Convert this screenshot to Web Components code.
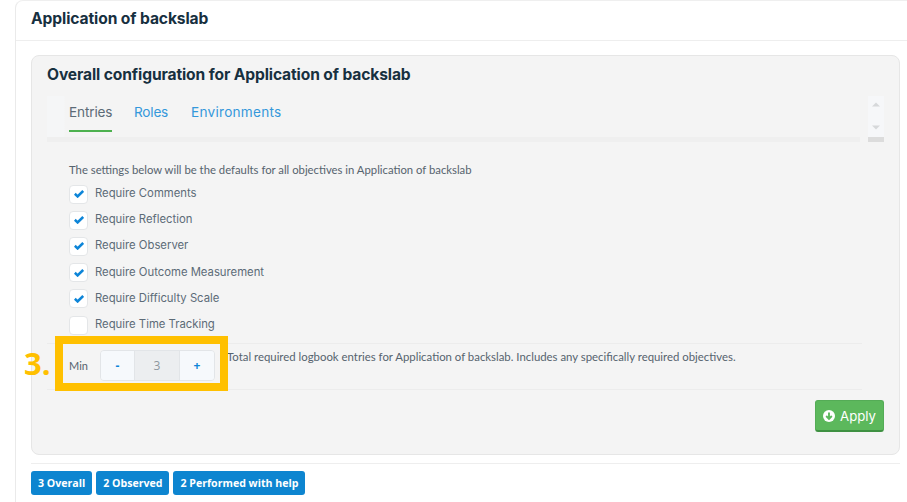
<!DOCTYPE html>
<html>
<head>
<meta charset="utf-8">
<style>
  html, body { margin: 0; height: 502px; overflow: hidden; background: #fff; }
  body { font-family: "Inter", "Liberation Sans", sans-serif; color: #5c6b77; position: relative; }
</style>
</head>
<body>
<app-card title="Application of backslab">
  <config-well title="Overall configuration for Application of backslab">
    <tab-bar></tab-bar>
    <p class="intro" style="margin:0;">The settings below will be the defaults for all objectives in Application of backslab</p>
    <check-row checked label="Require Comments"></check-row>
    <check-row checked label="Require Reflection"></check-row>
    <check-row checked label="Require Observer"></check-row>
    <check-row checked label="Require Outcome Measurement"></check-row>
    <check-row checked label="Require Difficulty Scale"></check-row>
    <check-row label="Require Time Tracking"></check-row>
    <min-stepper value="3">Total required logbook entries for Application of backslab. Includes any specifically required objectives.</min-stepper>
    <apply-button>Apply</apply-button>
  </config-well>
  <count-badge slot="footer">3 Overall</count-badge>
  <count-badge slot="footer">2 Observed</count-badge>
  <count-badge slot="footer">2 Performed with help</count-badge>
</app-card>
<call-out number="3."></call-out>

<script>
class AppCard extends HTMLElement {
  constructor() {
    super();
    this.attachShadow({ mode: 'open' });
  }
  connectedCallback() {
    this.shadowRoot.innerHTML = `
      <style>
        :host { display: block; margin-left: 15px; height: 502px; box-sizing: border-box;
          border-left: 1px solid #eaeaea; border-top: 1px solid #efefef; border-top-left-radius: 8px; }
        .head { height: 39px; border-bottom: 1px solid #eeeeee; padding-left: 15px; display: flex; align-items: center; }
        h2 { margin: 0; font: 700 15.6px "Inter", sans-serif; color: #17303f; position: relative; top: -2px; letter-spacing: -0.1px; }
        .body { padding: 14px 7px 0 15px; }
        .foot { margin: 8px 7px 0 15px; border-top: 1px solid #eeeeee; padding-top: 7px; display: flex; gap: 4px; }
      </style>
      <div class="head"><h2>${this.getAttribute('title')}</h2></div>
      <div class="body"><slot></slot></div>
      <div class="foot"><slot name="footer"></slot></div>`;
  }
}

class ConfigWell extends HTMLElement {
  constructor() {
    super();
    this.attachShadow({ mode: 'open' });
  }
  connectedCallback() {
    this.shadowRoot.innerHTML = `
      <style>
        :host { display: block; height: 400px; box-sizing: border-box; background: #f4f4f4;
          border: 1px solid #e6e6e6; border-radius: 8px; padding: 9px 15px 0; font-size: 11.5px; }
        h3 { margin: 0; font: 700 15.6px/20px "Inter", sans-serif; color: #17303f; letter-spacing: -0.12px; }
        .content { padding: 0; }
        ::slotted(p) { font: 400 11.3px/14px "Lato", sans-serif; color: #56636e; padding-left: 22px; margin-bottom: 5px !important; }
      </style>
      <h3>${this.getAttribute('title')}</h3>
      <div class="content"><slot></slot></div>`;
  }
}

class TabBar extends HTMLElement {
  constructor() {
    super();
    this.attachShadow({ mode: 'open' });
  }
  connectedCallback() {
    this.shadowRoot.innerHTML = `
      <style>
        :host { display: block; margin: 11px 0 21px; height: 46px; display: flex; gap: 8px; }
        .strip { flex: 1; height: 46px; display: flex; flex-direction: column; }
        .tabs { flex: 1; display: flex; gap: 22px; padding-left: 22px; background: linear-gradient(90deg,#f5f6f7 0,#f5f6f7 17px,#f4f4f4 18px); }
        .tab { height: 36px; box-sizing: border-box; padding-top: 7px; font: 400 13.6px/18px "Inter", sans-serif; color: #3498db; }
        .tab.on { color: #5c6b77; border-bottom: 2px solid #4db14f; width: 43px; letter-spacing: -0.15px; }
        .tab.env { margin-left: 1px; letter-spacing: 0.25px; }
        .tab.roles { letter-spacing: -0.2px; }
        .band { height: 5px; background: #efefef; }
        .bar { width: 16px; height: 46px; background: #f6f7f9; display: flex; flex-direction: column; align-items: center; }
        .bar svg { display: block; }
        .thumb { margin-top: auto; width: 16px; height: 5px; background: #dcdcdc; }
      </style>
      <div class="strip">
        <div class="tabs">
          <div class="tab on">Entries</div>
          <div class="tab roles">Roles</div>
          <div class="tab env">Environments</div>
        </div>
        <div class="band"></div>
      </div>
      <div class="bar">
        <svg width="8" height="5" viewBox="0 0 8 5" style="margin-top:6px"><path d="M4 0.5 8 4.5H0z" fill="#d6d8da"/></svg>
        <svg width="8" height="5" viewBox="0 0 8 5" style="margin-top:18px"><path d="M0 .5H8L4 4.5z" fill="#d6d8da"/></svg>
        <div class="thumb"></div>
      </div>`;
  }
}

class CheckRow extends HTMLElement {
  constructor() {
    super();
    this.attachShadow({ mode: 'open' });
  }
  connectedCallback() {
    const tick = this.hasAttribute('checked')
      ? '<svg width="10" height="8" viewBox="0 0 10 8"><path d="M.8 3.8 3.6 6.4 9.2 1" fill="none" stroke="#0d85d8" stroke-width="2.6"/></svg>'
      : '';
    this.shadowRoot.innerHTML = `
      <style>
        :host { display: flex; align-items: center; height: 26.2px; padding-left: 22px; gap: 7px; }
        .box { width: 17px; height: 17px; background: #fff; border: 1px solid #e4e6e8; border-radius: 4px;
          display: flex; align-items: center; justify-content: center; flex: none; margin-top: -2px; }
        span { font: 400 11.3px/14px "Inter", sans-serif; color: #5c6b77; position: relative; top: -2px; }
      </style>
      <div class="box">${tick}</div><span>${this.getAttribute('label')}</span>`;
  }
}

class MinStepper extends HTMLElement {
  constructor() {
    super();
    this.attachShadow({ mode: 'open' });
  }
  connectedCallback() {
    this.shadowRoot.innerHTML = `
      <style>
        :host { display: flex; align-items: flex-start; box-sizing: border-box; height: 47px; margin: 4px 22px 0 0;
          border-top: 1px solid #ececec; border-bottom: 1px solid #ececec; padding: 6px 0 0 22px; }
        .min { font: 400 11px/32px "Lato", sans-serif; color: #56636e; width: 31px; }
        .group { display: flex; height: 31px; width: 115px; box-sizing: border-box; border: 1px solid #e2e5e8; border-radius: 4px; overflow: hidden; }
        .btn { background: #f6f9fc; color: #0d85d8; font: 700 12px/29px "Open Sans", sans-serif; text-align: center; }
        .minus { width: 33px; border-right: 1px solid #e2e5e8; }
        .plus { flex: 1; border-left: 1px solid #e2e5e8; }
        .val { width: 44px; background: #eceef0; color: #8d979f; font: 400 12px/29px "Open Sans", sans-serif; text-align: center; }
        .note { margin-left: 12px; font: 400 11.39px/14px "Lato", sans-serif; color: #56636e; white-space: nowrap; }
      </style>
      <div class="min">Min</div>
      <div class="group">
        <div class="btn minus">-</div>
        <div class="val">${this.getAttribute('value')}</div>
        <div class="btn plus">+</div>
      </div>
      <div class="note"><slot></slot></div>`;
  }
}

class ApplyButton extends HTMLElement {
  constructor() {
    super();
    this.attachShadow({ mode: 'open' });
  }
  connectedCallback() {
    this.shadowRoot.innerHTML = `
      <style>
        :host { display: flex; justify-content: flex-end; margin-top: 10px; }
        button { width: 69px; height: 32px; padding: 0; border: 1px solid #54ac56; border-bottom: 2px solid #3f9142; border-radius: 3px;
          background: #5cb85c; color: #fff; font: 400 13.2px "Inter", sans-serif; display: flex; align-items: center; justify-content: center; gap: 5px; }
      </style>
      <button>
        <svg width="12" height="12" viewBox="0 0 12 12"><circle cx="6" cy="6" r="6" fill="#fff"/><path d="M6 2.6V9M3.2 6 6 8.8 8.8 6" fill="none" stroke="#5cb85c" stroke-width="1.9"/></svg>
        <slot></slot>
      </button>`;
  }
}

class CountBadge extends HTMLElement {
  constructor() {
    super();
    this.attachShadow({ mode: 'open' });
  }
  connectedCallback() {
    this.shadowRoot.innerHTML = `
      <style>
        :host { display: block; height: 24px; padding: 0 7px; background: #0d85d0; color: #fff; border-radius: 3px;
          font: 700 10.6px/24px "Open Sans", sans-serif; white-space: nowrap; }
      </style>
      <slot></slot>`;
  }
}

// annotation drawn on top of the screenshot
class CallOut extends HTMLElement {
  constructor() {
    super();
    this.attachShadow({ mode: 'open' });
  }
  connectedCallback() {
    this.shadowRoot.innerHTML = `
      <style>
        :host { display: block; position: absolute; left: 24px; top: 336px; width: 204px; height: 55px; }
        .num { position: absolute; left: 0; top: 9px; font: 700 31px/36px "Open Sans", sans-serif; color: #ffc000; }
        .frame { position: absolute; left: 31px; top: 0; width: 173px; height: 55px; box-sizing: border-box; border: 8px solid #ffc000; }
      </style>
      <div class="num">${this.getAttribute('number')}</div>
      <div class="frame"></div>`;
  }
}

customElements.define('app-card', AppCard);
customElements.define('config-well', ConfigWell);
customElements.define('tab-bar', TabBar);
customElements.define('check-row', CheckRow);
customElements.define('min-stepper', MinStepper);
customElements.define('apply-button', ApplyButton);
customElements.define('count-badge', CountBadge);
customElements.define('call-out', CallOut);
</script>
</body>
</html>
